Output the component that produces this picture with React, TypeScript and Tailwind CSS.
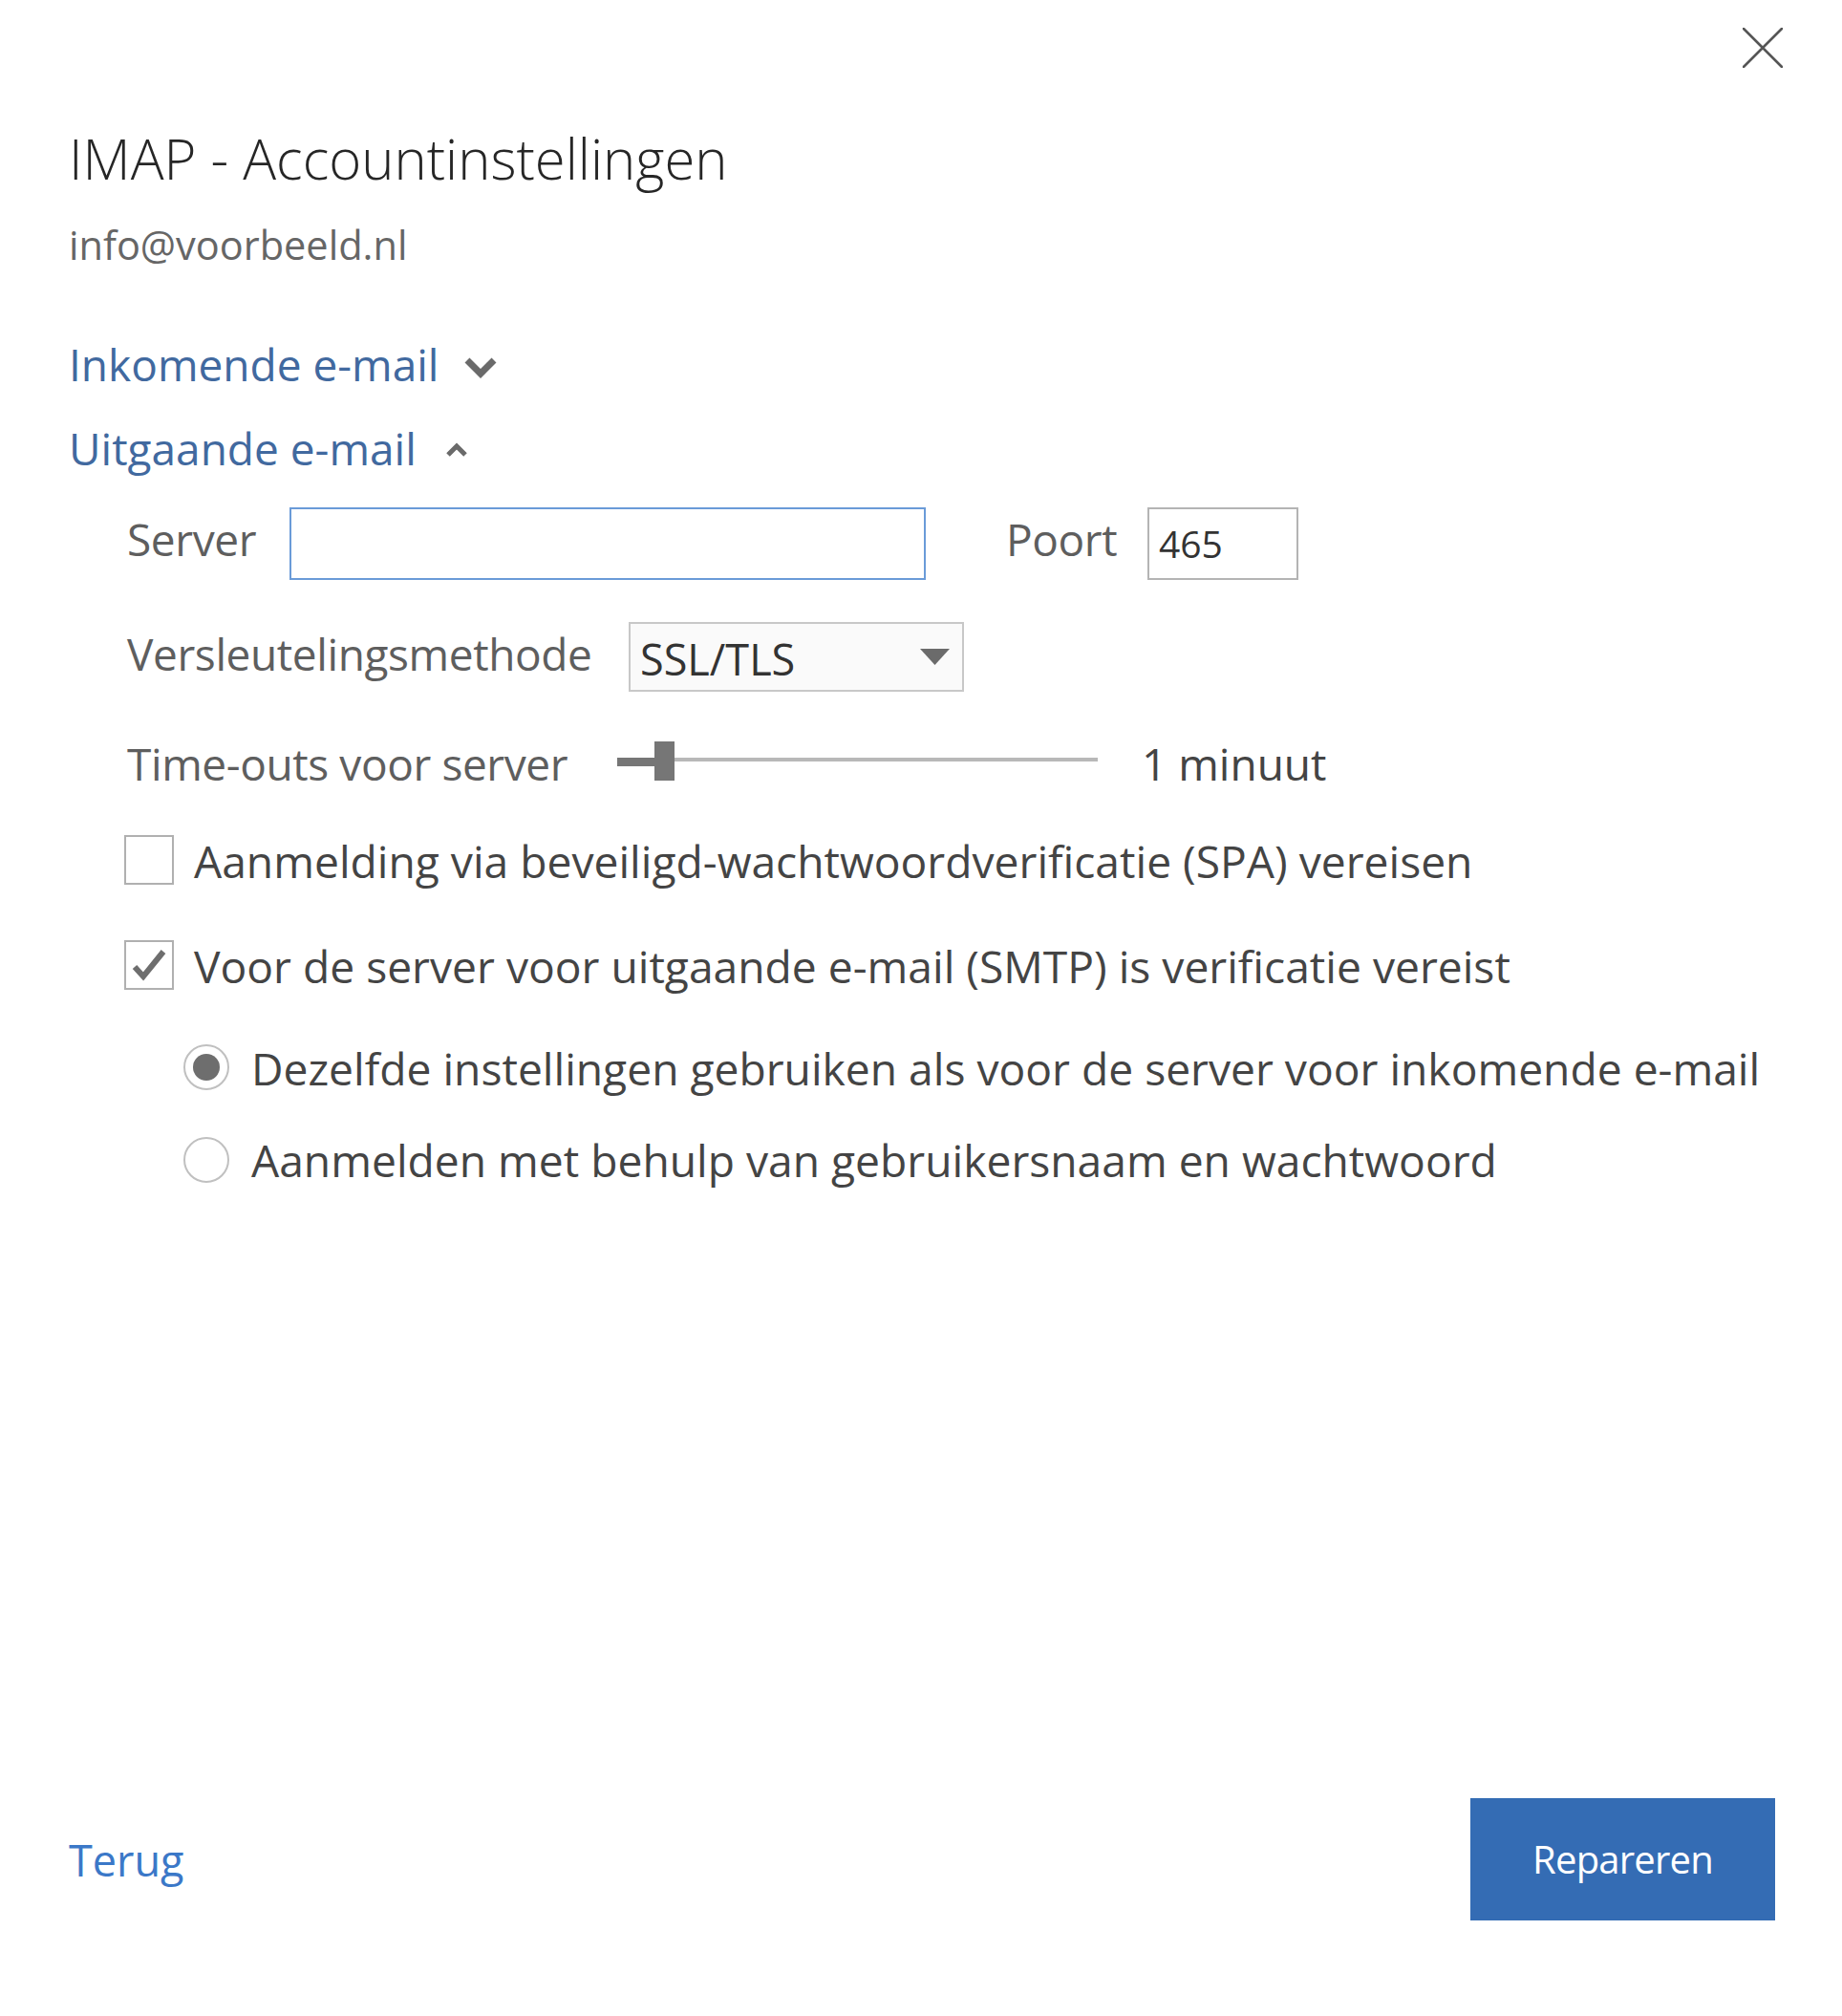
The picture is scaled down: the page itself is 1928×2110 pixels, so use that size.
import React from "react";

export default function App() {
  return (
    <div
      className="relative flex h-[2110px] w-[1928px] flex-col bg-white pl-[72px] pr-[70px] pb-[100px]"
      style={{ fontFamily: '"Open Sans", "Noto Sans", sans-serif' }}
    >
      {/* close */}
      <div className="flex justify-end pt-[29px]">
        <svg width="42" height="42" viewBox="0 0 42 42" className="mr-[-8px]">
          <path d="M1 1 L41 41 M41 1 L1 41" stroke="#555" strokeWidth="2.6" strokeLinecap="round" />
        </svg>
      </div>

      {/* title */}
      <div className="mt-[66px] text-[58px] font-light leading-none text-[#262626]">IMAP - Accountinstellingen</div>
      <div className="mt-[41px] h-[42px] text-[41.5px] leading-none text-[#666]">info@voorbeeld.nl</div>

      {/* sections */}
      <div className="mt-[80px] flex h-[48px] items-start">
        <span className="text-[46px] leading-none text-[#41699f]">Inkomende e-mail</span>
        <svg width="36" height="24" viewBox="0 0 36 24" className="ml-[26px] mt-[15px]">
          <path d="M4 4 L18 18 L32 4" fill="none" stroke="#6a6a6a" strokeWidth="7" />
        </svg>
      </div>
      <div className="mt-[40px] flex h-[48px] items-start">
        <span className="text-[46px] leading-none text-[#41699f]">Uitgaande e-mail</span>
        <svg width="24" height="16" viewBox="0 0 24 16" className="ml-[30px] mt-[17px]">
          <path d="M3 13 L12 4 L21 13" fill="none" stroke="#6a6a6a" strokeWidth="5" />
        </svg>
      </div>

      {/* server row */}
      <div className="mt-[37px] flex h-[76px] items-start pl-[61px]">
        <div className="mt-[10px] w-[170px] text-[46px] leading-none tracking-[-0.4px] text-[#5e5e5e]">Server</div>
        <div className="h-[76px] w-[666px] border-2 border-[#6a9bd8] bg-white" />
        <div className="ml-[84px] mt-[10px] w-[148px] text-[46px] leading-none tracking-[-0.4px] text-[#5e5e5e]">Poort</div>
        <div className="flex h-[76px] w-[158px] items-start border-2 border-[#b4b4b4] bg-white pl-[10px] pt-[16px] text-[39px] leading-none text-[#333]">
          465
        </div>
      </div>

      {/* encryption */}
      <div className="mt-[44px] flex h-[73px] items-start pl-[61px]">
        <div className="mt-[10px] w-[525px] text-[46px] leading-none tracking-[-0.4px] text-[#5e5e5e]">Versleutelingsmethode</div>
        <div className="flex h-[73px] w-[351px] items-start justify-between border-2 border-[#c8c8c8] bg-[#fafafa] pl-[10px] pr-[13px] pt-[14px]">
          <span className="text-[45px] leading-none text-[#333]">SSL/TLS</span>
          <svg width="31" height="17" viewBox="0 0 31 17" className="mt-[12px]">
            <path d="M0 0 L31 0 L15.5 17 Z" fill="#6b6b6b" />
          </svg>
        </div>
      </div>

      {/* timeouts */}
      <div className="mt-[52px] flex h-[41px] items-start pl-[61px]">
        <div className="w-[513px] text-[46px] leading-none tracking-[-0.4px] text-[#5e5e5e]">Time-outs voor server</div>
        <div className="relative h-[41px] w-[503px]">
          <div className="absolute left-0 top-[17px] h-[9px] w-[40px] bg-[#767676]" />
          <div className="absolute left-[60px] right-0 top-[17px] h-[4px] bg-[#b8b8b8]" />
          <div className="absolute left-[39px] top-0 h-[41px] w-[21px] bg-[#767676]" />
        </div>
        <div className="ml-[46px] text-[46px] leading-none text-[#444]">1 minuut</div>
      </div>

      {/* checkbox 1 */}
      <div className="mt-[57px] flex h-[52px] items-start pl-[58px]">
        <div className="h-[52px] w-[52px] border-2 border-[#b0b0b0] bg-white" />
        <div className="ml-[21px] mt-[5px] text-[46.2px] leading-none text-[#444]">
          Aanmelding via beveiligd-wachtwoordverificatie (SPA) vereisen
        </div>
      </div>

      {/* checkbox 2 */}
      <div className="mt-[58px] flex h-[52px] items-start pl-[58px]">
        <div className="flex h-[52px] w-[52px] items-center justify-center border-2 border-[#b0b0b0] bg-white">
          <svg width="36" height="34" viewBox="0 0 36 34">
            <path d="M3 19 L12 29 L33 3" fill="none" stroke="#6e6e6e" strokeWidth="6" />
          </svg>
        </div>
        <div className="ml-[21px] mt-[5px] text-[46.2px] leading-none text-[#444]">
          Voor de server voor uitgaande e-mail (SMTP) is verificatie vereist
        </div>
      </div>

      {/* radio 1 */}
      <div className="mt-[57px] flex h-[48px] items-start pl-[120px]">
        <div className="flex h-[48px] w-[48px] items-center justify-center rounded-full border-2 border-[#c0c0c0] bg-white">
          <div className="h-[28px] w-[28px] rounded-full bg-[#6e6e6e]" />
        </div>
        <div className="ml-[23px] mt-[3px] text-[46.2px] leading-none text-[#444]">
          Dezelfde instellingen gebruiken als voor de server voor inkomende e-mail
        </div>
      </div>

      {/* radio 2 */}
      <div className="mt-[49px] flex h-[48px] items-start pl-[120px]">
        <div className="h-[48px] w-[48px] rounded-full border-2 border-[#c0c0c0] bg-white" />
        <div className="ml-[23px] mt-[2px] text-[46.2px] leading-none text-[#444]">
          Aanmelden met behulp van gebruikersnaam en wachtwoord
        </div>
      </div>

      <div className="flex-1" />

      {/* footer */}
      <div className="flex items-center justify-between">
        <span className="text-[45px] leading-none text-[#3b78c8]">Terug</span>
        <div className="flex h-[128px] w-[319px] items-center justify-center bg-[#346cb4] text-[40px] leading-none tracking-[-0.8px] text-white">
          Repareren
        </div>
      </div>
    </div>
  );
}
